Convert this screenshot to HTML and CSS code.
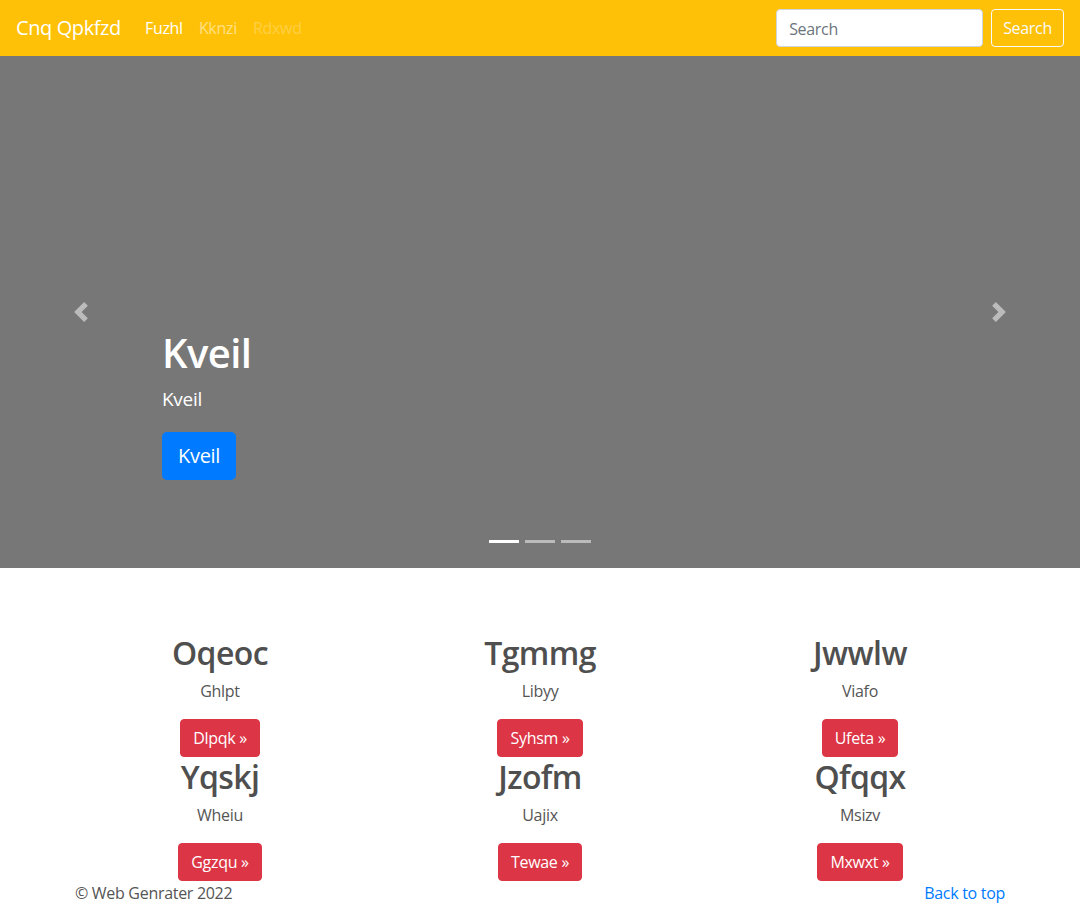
FILE: index.html
```html
<!DOCTYPE html>
<html lang="en">
<head>
<meta charset="utf-8">
<title>Cnq Qpkfzd</title>
<link rel="stylesheet" href="styles.css">
</head>
<body>
<header class="navbar">
  <div class="nav-left">
    <a class="brand" href="#">Cnq Qpkfzd</a>
    <nav class="nav-links">
      <a class="nav-link active" href="#">Fuzhl</a>
      <a class="nav-link" href="#">Kknzi</a>
      <a class="nav-link disabled" href="#">Rdxwd</a>
    </nav>
  </div>
  <form class="search">
    <input class="search-input" type="text" placeholder="Search">
    <button class="search-btn" type="button">Search</button>
  </form>
</header>

<section class="carousel">
  <a class="control prev" href="#">
    <svg width="20" height="20" viewBox="0 0 8 8" fill="#fff"><path d="M5.25 0l-4 4 4 4 1.5-1.5L4.25 4l2.5-2.5L5.25 0z"/></svg>
  </a>
  <div class="caption">
    <h1 class="caption-title">Kveil</h1>
    <p class="caption-text">Kveil</p>
    <a class="btn-primary" href="#">Kveil</a>
  </div>
  <a class="control next" href="#">
    <svg width="20" height="20" viewBox="0 0 8 8" fill="#fff"><path d="M2.75 0l-1.5 1.5L3.75 4l-2.5 2.5L2.75 8l4-4-4-4z"/></svg>
  </a>
  <ol class="indicators">
    <li class="ind active"></li>
    <li class="ind"></li>
    <li class="ind"></li>
  </ol>
</section>

<main class="marketing">
  <div class="grid">
    <div class="col"><h2>Oqeoc</h2><p>Ghlpt</p><a class="btn-danger" href="#">Dlpqk &raquo;</a></div>
    <div class="col"><h2>Tgmmg</h2><p>Libyy</p><a class="btn-danger" href="#">Syhsm &raquo;</a></div>
    <div class="col"><h2>Jwwlw</h2><p>Viafo</p><a class="btn-danger" href="#">Ufeta &raquo;</a></div>
    <div class="col"><h2>Yqskj</h2><p>Wheiu</p><a class="btn-danger" href="#">Ggzqu &raquo;</a></div>
    <div class="col"><h2>Jzofm</h2><p>Uajix</p><a class="btn-danger" href="#">Tewae &raquo;</a></div>
    <div class="col"><h2>Qfqqx</h2><p>Msizv</p><a class="btn-danger" href="#">Mxwxt &raquo;</a></div>
  </div>
  <footer class="footer">
    <span>&copy; Web Genrater 2022</span>
    <a class="back" href="#">Back to top</a>
  </footer>
</main>
</body>
</html>
```

FILE: styles.css
```css
* { box-sizing: border-box; }
html, body { margin: 0; padding: 0; }
body {
  font-family: "Open Sans", "Noto Sans", "Liberation Sans", sans-serif;
  font-size: 16px;
  line-height: 1.5;
  letter-spacing: -0.3px;
  color: #555;
  background: #fff;
  width: 1080px;
  height: 905px;
  overflow: hidden;
}
a { text-decoration: none; }

.navbar {
  height: 56px;
  background: #ffc107;
  display: flex;
  align-items: center;
  justify-content: space-between;
  padding: 0 16px;
}
.nav-left { display: flex; align-items: center; }
.brand {
  color: #fff;
  font-size: 20px;
  line-height: 30px;
  margin-right: 16px;
  letter-spacing: -0.4px;
}
.nav-links { display: flex; }
.nav-link {
  padding: 8px;
  color: rgba(255,255,255,0.5);
  font-size: 16px;
}
.nav-link.active { color: #fff; }
.nav-link.disabled { color: rgba(255,255,255,0.25); }

.search { display: flex; align-items: center; }
.search-input {
  width: 207px;
  height: 38px;
  border: 1px solid #ced4da;
  border-radius: 4px;
  padding: 7px 12px 5px;
  font: inherit;
  font-size: 16px;
  letter-spacing: -0.3px;
  color: #495057;
  background: #fff;
  margin-right: 8px;
}
.search-input::placeholder { color: #6c757d; }
.search-btn {
  height: 38px;
  padding: 0 11px;
  border: 1px solid #f8f9fa;
  border-radius: 4px;
  background: transparent;
  color: #f8f9fa;
  font: inherit;
  font-size: 16px;
  letter-spacing: -0.3px;
}

.carousel {
  height: 512px;
  background: #777;
  position: relative;
  display: flex;
  align-items: flex-end;
  padding: 0 162px 88px;
}
.control {
  position: absolute;
  top: 0;
  bottom: 0;
  width: 162px;
  display: flex;
  align-items: center;
  justify-content: center;
  opacity: 0.5;
}
.control.prev { left: 0; }
.control.next { right: 0; }
.caption { color: #fff; }
.caption-title {
  margin: 0 0 8px;
  font-size: 40px;
  font-weight: 600;
  line-height: 1.2;
  letter-spacing: -0.6px;
}
.caption-text {
  margin: 0 0 19px;
  font-size: 19px;
  line-height: 1.5;
}
.btn-primary {
  display: inline-block;
  background: #007bff;
  color: #fff;
  font-size: 20px;
  line-height: 30px;
  padding: 9px 16px;
  border-radius: 5px;
}
.indicators {
  position: absolute;
  left: 0;
  right: 0;
  bottom: 25px;
  margin: 0;
  padding: 0;
  list-style: none;
  display: flex;
  justify-content: center;
  gap: 6px;
}
.ind {
  width: 30px;
  height: 3px;
  background: rgba(255,255,255,0.5);
}
.ind.active { background: #fff; }

.marketing {
  width: 960px;
  margin: 0 auto;
  padding: 65px 15px 0;
}
.grid {
  display: grid;
  grid-template-columns: repeat(3, 1fr);
  margin: 0 -15px;
}
.col { text-align: center; padding: 0 15px; }
.col h2 {
  margin: 0 0 6px;
  font-size: 32px;
  font-weight: 600;
  line-height: 40px;
  letter-spacing: -0.6px;
  color: #4f4f4f;
}
.col p { margin: 0 0 16px; }
.btn-danger {
  display: inline-block;
  background: #dc3545;
  border: 1px solid #dc3545;
  color: #fff;
  padding: 6px 12px;
  border-radius: 4px;
  line-height: 24px;
  font-size: 16px;
}
.footer {
  display: flex;
  justify-content: space-between;
  line-height: 24px;
}
.back { color: #007bff; }
```
